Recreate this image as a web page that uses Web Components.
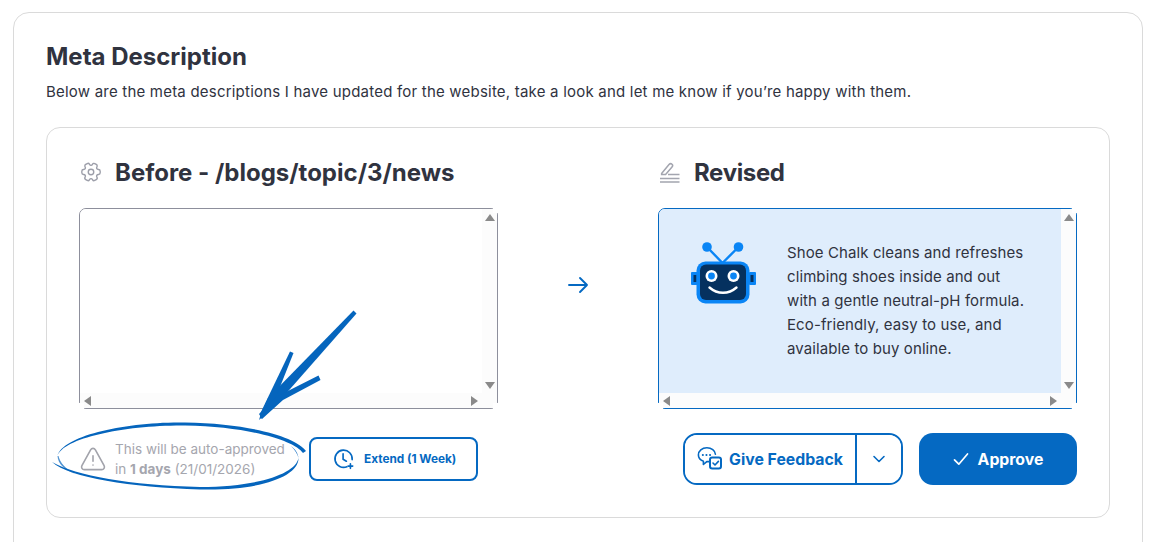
<!DOCTYPE html>
<html lang="en">
<head>
<meta charset="utf-8">
<title>Meta Description</title>
<style>
  html, body { margin: 0; height: 542px; overflow: hidden; background: #fff; }
  body { font-family: "Inter", "Liberation Sans", sans-serif; color: #30333f; position: relative; }
</style>
</head>
<body>
<meta-card>
  <span slot="title">Meta Description</span>
  <span slot="intro">Below are the meta descriptions I have updated for the website, take a look and let me know if you’re happy with them.</span>
  <compare-panel>
    <panel-column slot="before" icon="gear">
      <span slot="heading">Before - /blogs/topic/3/news</span>
      <scroll-box></scroll-box>
    </panel-column>
    <panel-column slot="revised" icon="pen">
      <span slot="heading" style="letter-spacing: -.35px">Revised</span>
      <scroll-box tone="blue">
        <robot-copy>Shoe Chalk cleans and refreshes climbing shoes inside and out with a gentle neutral-pH formula. Eco-friendly, easy to use, and available to buy online.</robot-copy>
      </scroll-box>
    </panel-column>
    <auto-notice slot="notice"><span slot="line1">This will be auto-approved</span><span slot="line2">in <b>1 days</b> (21/01/2026)</span></auto-notice>
    <review-actions slot="actions"></review-actions>
  </compare-panel>
</meta-card>
<hand-annotation></hand-annotation>

<script>
const ICONS = {
  gear: `<svg width="22" height="22" viewBox="0 0 24 24" fill="none" stroke="#9c9ea9" stroke-width="1.5" stroke-linejoin="round"><circle cx="12" cy="12" r="3"/><path d="M2 12.88v-1.76c0-1.04.85-1.9 1.9-1.9 1.81 0 2.55-1.28 1.64-2.85-.52-.9-.21-2.07.7-2.59l1.73-.99c.79-.47 1.81-.19 2.28.6l.11.19c.9 1.57 2.38 1.57 3.29 0l.11-.19c.47-.79 1.49-1.07 2.28-.6l1.73.99c.91.52 1.22 1.69.7 2.59-.91 1.57-.17 2.85 1.64 2.85 1.04 0 1.9.85 1.9 1.9v1.76c0 1.04-.85 1.9-1.9 1.9-1.81 0-2.55 1.28-1.64 2.85.52.91.21 2.07-.7 2.59l-1.73.99c-.79.47-1.81.19-2.28-.6l-.11-.19c-.9-1.57-2.38-1.57-3.29 0l-.11.19c-.47.79-1.49 1.07-2.28.6l-1.73-.99a1.9 1.9 0 0 1-.7-2.59c.91-1.57.17-2.85-1.64-2.85-1.05 0-1.9-.86-1.9-1.9Z"/></svg>`,
  pen: `<svg width="22" height="22" viewBox="0 0 22 22" fill="none" stroke="#a3a5af" stroke-width="1.5"><path d="M2.6 12.6 10 3.6c.9-1 2.2-1.1 3-.4.8.7.8 1.9 0 2.9L6.6 13.6H2.6Z"/><path d="M9 13.6h11.5M1 17.4h19.5M1 21h19.5"/></svg>`,
  clock: `<svg width="22" height="22" viewBox="0 0 24 24" fill="none" stroke="#0569c2" stroke-width="1.8" stroke-linecap="round" stroke-linejoin="round"><path d="M15.2 20.4A9.4 9.4 0 1 1 20.9 12.6"/><path d="M11 6.4v5.8l3.6 2.2"/><path d="M19 17.2v5M16.5 19.7h5"/></svg>`,
  warning: `<svg width="26" height="24" viewBox="0 0 26 24" fill="none" stroke="#a2a3ab" stroke-width="1.6" stroke-linecap="round" stroke-linejoin="round"><path d="M10.6 2.8 1.9 18.6c-1 1.9.3 4 2.4 4h17.4c2.1 0 3.4-2.1 2.4-4L15.4 2.8c-1.1-1.9-3.7-1.9-4.8 0Z"/><path d="M13 8.8v5.4M13 18v.1"/></svg>`,
  feedback: `<svg width="26" height="26" viewBox="0 0 26 26" fill="none" stroke="#0569c2" stroke-width="1.6" stroke-linecap="round" stroke-linejoin="round"><path d="M12 15.6H9.8l-3.4 2.9v-3.3C3.3 14 1.4 11.500 1.400 8.900 1.400 5 5 1.800 9.900 1.800c4.600 0 8.200 2.800 8.500 6.500"/><path d="M5.800 8.900h.1M9.400 8.900h.1M13 8.900h.1" stroke-width="2"/><rect x="13" y="11.400" width="11" height="11" rx="2.200" stroke-width="2"/><path d="m16 17 2 2 3.400-3.600"/></svg>`,
  check: `<svg width="16" height="14" viewBox="0 0 16 14" fill="none" stroke="#fff" stroke-width="1.7" stroke-linecap="round" stroke-linejoin="round"><path d="m1.500 7.800 4.300 4.400L14.500 2"/></svg>`,
  chevron: `<svg width="14" height="10" viewBox="0 0 14 10" fill="none" stroke="#0569c2" stroke-width="1.6" stroke-linecap="round" stroke-linejoin="round"><path d="m2 2.500 5 5 5-5"/></svg>`,
  arrow: `<svg width="24" height="20" viewBox="0 0 24 20" fill="none" stroke="#0569c2" stroke-width="1.9" stroke-linecap="round" stroke-linejoin="round"><path d="M3 10h18M14 3l7 7-7 7"/></svg>`
};

/* Base class, every element only has to give its template */
class ShadowElement extends HTMLElement {
  constructor() {
    super();
    this.attachShadow({ mode: 'open' });
  }

  connectedCallback() {
    this.shadowRoot.innerHTML = this.getRenderTemplate();
  }
}

class MetaCard extends ShadowElement {
  getRenderTemplate() {
    return `
      <style>
        :host { display: block; margin: 12px 10px 0 13px; height: 600px; box-sizing: border-box;
                border: 1px solid #dadada; border-radius: 16px; padding: 29px 32px 0; background: #fff; }
        h2 { margin: 0; font-size: 24px; line-height: 30px; font-weight: 700; color: #30333f; }
        p { margin: 8px 0 23px; font-size: 15px; line-height: 24px; letter-spacing: .21px; color: #30333f; }
      </style>
      <h2><slot name="title"></slot></h2>
      <p><slot name="intro"></slot></p>
      <slot></slot>
    `;
  }
}

class ComparePanel extends ShadowElement {
  getRenderTemplate() {
    return `
      <style>
        :host { display: grid; grid-template-columns: 419px 160px 419px; grid-template-rows: auto 52px; row-gap: 24px;
                border: 1px solid #dadada; border-radius: 14px; padding: 32px; }
        .arrow { display: flex; align-items: center; justify-content: center; }
        .arrow svg { display: block; }
        .notice { grid-column: 1; display: flex; align-items: center; }
        .actions { grid-column: 3; display: flex; align-items: center; justify-content: flex-end; }
      </style>
      <slot name="before"></slot>
      <div class="arrow">${ICONS.arrow}</div>
      <slot name="revised"></slot>
      <div class="notice"><slot name="notice"></slot></div>
      <div class="actions"><slot name="actions"></slot></div>
    `;
  }
}

class PanelColumn extends ShadowElement {
  getRenderTemplate() {
    return `
      <style>
        :host { display: block; }
        .head { display: flex; align-items: center; gap: 13px; height: 24px; margin: 0 0 24px 1px;
                font-size: 24px; font-weight: 700; color: #30333f; }
        .head svg { display: block; flex: none; }
      </style>
      <div class="head">${ICONS[this.getAttribute('icon')]}<slot name="heading"></slot></div>
      <slot></slot>
    `;
  }
}

/* Draws its own scrollbars, so they always show in the photo */
class ScrollBox extends ShadowElement {
  getRenderTemplate() {
    const blue = this.getAttribute('tone') === 'blue';
    return `
      <style>
        :host { display: grid; position: relative; grid-template-columns: 402px 15px; grid-template-rows: 184px 15px; height: 201px;
                box-sizing: border-box; border-radius: 7px;
                border: 1px solid ${blue ? '#0569c2' : '#8d8f9c'}; background: #fff; }
        .content { background: ${blue ? '#dfedfc' : '#fff'}; overflow: hidden; border-top-left-radius: 6px; }
        .v, .h, .corner { background: #fcfcfc; }
        .v { display: flex; flex-direction: column; justify-content: space-between; align-items: center; padding: 5px 0 4px; box-sizing: border-box; }
        .h { display: flex; justify-content: space-between; align-items: center; padding: 0 4px; box-sizing: border-box; }
        i { display: block; width: 0; height: 0; border-style: solid; border-color: transparent; }
        .up { border-width: 0 5px 7px; border-bottom-color: #8a8a8a; }
        .down { border-width: 7px 5px 0; border-top-color: #8a8a8a; }
        .left { border-width: 5px 7px 5px 0; border-right-color: #8a8a8a; }
        .right { border-width: 5px 0 5px 7px; border-left-color: #8a8a8a; }
        /* the scrollbars paint over the rounded corners of the border */
        u { position: absolute; width: 5px; height: 5px; background: #fff; }
        .tr { top: -1px; right: -1px; }
        .br { bottom: -1px; right: -1px; height: 6px; }
        .bl { bottom: -1px; left: -1px; height: 6px; }
      </style>
      <div class="content"><slot></slot></div>
      <div class="v"><i class="up"></i><i class="down"></i></div>
      <div class="h"><i class="left"></i><i class="right"></i></div>
      <div class="corner"></div>
      <u class="tr"></u><u class="br"></u><u class="bl"></u>
    `;
  }
}

class RobotCopy extends ShadowElement {
  getRenderTemplate() {
    return `
      <style>
        :host { display: flex; align-items: flex-start; gap: 30px; padding: 31px 0 0 32px; }
        svg { display: block; flex: none; margin-top: 1px; }
        div { width: 240px; margin-top: 1px; font-size: 15px; line-height: 24px; letter-spacing: .1px; color: #30333f; }
      </style>
      <svg width="66" height="64" viewBox="691 241 66 64">
        <path d="M722.500 263 707 247M722.500 263 738.500 247" stroke="#0a85f5" stroke-width="2.400" fill="none"/>
        <circle cx="707" cy="247" r="4.800" fill="#0a85f5"/>
        <circle cx="738.500" cy="247" r="4.800" fill="#0a85f5"/>
        <rect x="691" y="272" width="7" height="13" rx="1" fill="#0a85f5"/>
        <rect x="749" y="272" width="7" height="13" rx="1" fill="#0a85f5"/>
        <rect x="693.500" y="275" width="3" height="7" fill="#05315f"/>
        <rect x="750.500" y="275" width="3" height="7" fill="#05315f"/>
        <rect x="696.500" y="261.500" width="53" height="42" rx="9" fill="#0a85f5"/>
        <rect x="700" y="264.500" width="46" height="35.500" rx="6" fill="#05315f"/>
        <circle cx="711.500" cy="276" r="6" fill="#fff"/>
        <circle cx="711.500" cy="276" r="3.400" fill="#0a85f5"/>
        <circle cx="733.500" cy="276" r="6" fill="#fff"/>
        <circle cx="733.500" cy="276" r="3.400" fill="#0a85f5"/>
        <path d="M709.500 287.500c8 7 19 7 27 0" stroke="#fff" stroke-width="2.400" stroke-linecap="round" fill="none"/>
      </svg>
      <div><slot></slot></div>
    `;
  }
}

class AutoNotice extends ShadowElement {
  getRenderTemplate() {
    return `
      <style>
        :host { display: flex; align-items: center; width: 100%; padding-left: 1px; }
        svg { display: block; flex: none; }
        .txt { width: 194px; margin-left: 9px; font-size: 13.5px; line-height: 20px; color: #a5a6ae; white-space: nowrap; }
        ::slotted(span) { display: block; }
        button { display: flex; align-items: center; height: 44px; width: 169px; box-sizing: border-box; padding: 0 0 0 22px; gap: 9px;
                 border: 2px solid #0569c2; border-radius: 8px; background: #fff; color: #0569c2; font: 700 11.8px "Inter", sans-serif; }
      </style>
      ${ICONS.warning}
      <div class="txt"><slot name="line1"></slot><slot name="line2"></slot></div>
      <button>${ICONS.clock}<span>Extend (1 Week)</span></button>
    `;
  }
}

class ReviewActions extends ShadowElement {
  getRenderTemplate() {
    return `
      <style>
        :host { display: flex; gap: 16px; }
        button { font-family: "Inter", sans-serif; font-weight: 700; font-size: 15.8px; height: 52px; box-sizing: border-box; display: flex; align-items: center; justify-content: center; padding: 0; }
        .split { display: flex; width: 220px; height: 52px; box-sizing: border-box; border: 2px solid #0569c2; border-radius: 14px; overflow: hidden; }
        .feedback { width: 172px; height: 48px; gap: 6px; border: 0; border-right: 2px solid #0569c2; background: #fff; color: #0569c2; }
        .more { flex: 1; height: 48px; border: 0; background: #fff; }
        .approve { width: 158px; gap: 9px; border: 0; border-radius: 14px; background: #0569c2; color: #fff; }
      </style>
      <div class="split">
        <button class="feedback">${ICONS.feedback}<span>Give Feedback</span></button>
        <button class="more">${ICONS.chevron}</button>
      </div>
      <button class="approve">${ICONS.check}<span>Approve</span></button>
    `;
  }
}

/* Hand drawn arrow and circle on top of the page, coordinates are page pixels */
class HandAnnotation extends ShadowElement {
  getRenderTemplate() {
    return `
      <style>
        :host { position: absolute; left: 0; top: 0; width: 1153px; height: 542px; pointer-events: none; }
        svg { display: block; }
      </style>
      <svg width="1153" height="542" viewBox="0 0 1153 542" fill="#0565bd">
        <path d="M353.500 310.500 356.500 313.500 276 405 259 420 260.500 415 268 398Z"/>
        <path d="M290 351.500 293.500 353 272 407 261 419 260 414Z"/>
        <path d="M318.500 375.500 320.500 380 283 400 262 419 259 414 276 397Z"/>
        <path d="M306 451C296 437 250 423.500 185 422.500 125 421.500 62 436 57.500 456 63 438 125 425 185 425.500 250 426.500 295 441 303 453Z"/>
        <path d="M52 462C70 478 130 487 200 489.500 262 491 299 476 298.500 458 296 473 260 487 200 487 130 485 76 476 52 462Z"/>
        <path d="M57.500 456C58 464 64 469 75 474 66 469 60 463 58.500 456Z" opacity=".7"/>
        <path d="M298.500 458C298 453 295 449 291 446 295 450 297.500 454 298.500 458Z"/>
      </svg>
    `;
  }
}

customElements.define('meta-card', MetaCard);
customElements.define('compare-panel', ComparePanel);
customElements.define('panel-column', PanelColumn);
customElements.define('scroll-box', ScrollBox);
customElements.define('robot-copy', RobotCopy);
customElements.define('auto-notice', AutoNotice);
customElements.define('review-actions', ReviewActions);
customElements.define('hand-annotation', HandAnnotation);
</script>
</body>
</html>
